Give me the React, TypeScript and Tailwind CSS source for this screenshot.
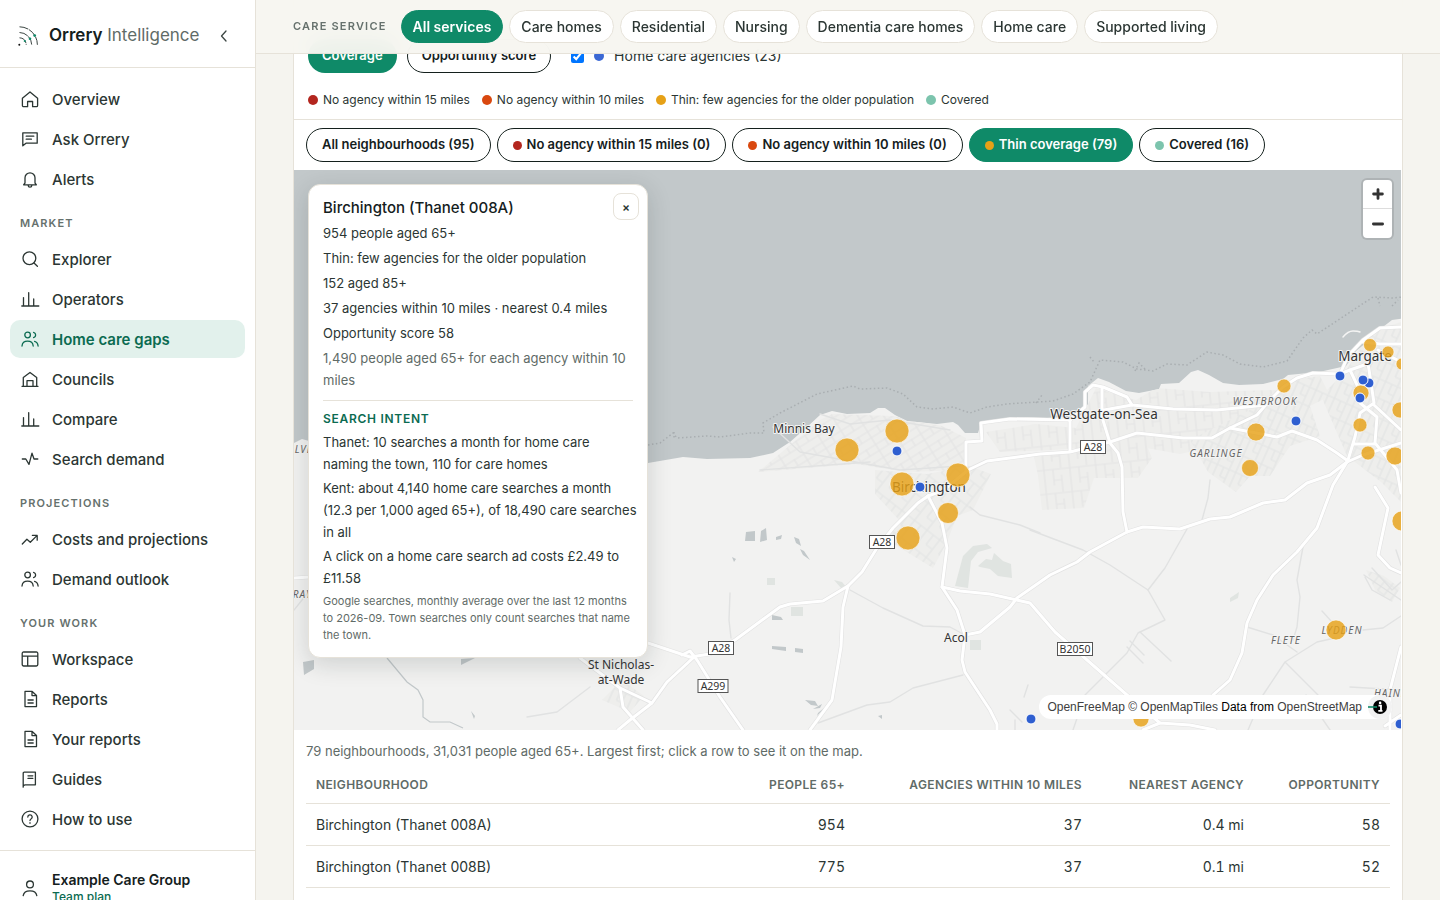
import React, { useState } from 'react';
import clsx from 'clsx';

type IconName =
  | 'home' | 'chat' | 'bell' | 'search' | 'bars' | 'users' | 'council'
  | 'pulse' | 'trend' | 'layout' | 'file' | 'book' | 'help' | 'user';

const ICONS: Record<IconName, React.ReactNode> = {
  home: <path d="M2.4 9.2 10 3l7.6 6.2v7.3a1.2 1.2 0 0 1-1.2 1.2h-3.8v-5.2H7.6v5.2H3.6a1.2 1.2 0 0 1-1.2-1.2z" />,
  chat: <path d="M2.8 3.8h14.4v10.4H6l-3.2 2.6zM6.2 7.2h7.6M6.2 10.2h5.2" />,
  bell: <path d="M5 14V8.8a5 5 0 0 1 10 0V14l1.4 1.8H3.6zM8.2 16v.4a1.8 1.8 0 0 0 3.6 0V16" />,
  search: <><circle cx="9.4" cy="9.2" r="6.4" /><path d="m14 14 3.4 3.2" /></>,
  bars: <path d="M1.8 17h17M3.5 17V8.6M8.7 17V3.6M13.7 17v-7" />,
  users: (
    <>
      <circle cx="7.6" cy="6" r="2.8" />
      <path d="M2 17c.3-3 2.6-4.8 5.6-4.8s5.3 1.8 5.6 4.8M13.6 3.3a2.8 2.8 0 0 1 0 5.4M14.6 12.3c2 .5 3.2 2.2 3.5 4.7" />
    </>
  ),
  council: <path d="M3.3 17.3V8.4L10 3.4l6.7 5v8.9M2 17.3h16M7 17.3v-5.6h6v5.6" />,
  pulse: <path d="M2.3 10h3.5l3.2 5.4L12 4.2l2 5.8h3.8" />,
  trend: <path d="m2.3 15 4.6-4.8 3.4 3L17.2 6.4M12.4 6.4h4.8v4.8" />,
  layout: <path d="M3.6 3h12.8A1.4 1.4 0 0 1 17.8 4.4v11.2a1.4 1.4 0 0 1-1.4 1.4H3.6a1.4 1.4 0 0 1-1.4-1.4V4.4A1.4 1.4 0 0 1 3.6 3zM2.2 7.2h15.6M7.7 7.2V17" />,
  file: <path d="M5 2.4h7.2l4.3 4v11.2H5zM12 2.4v4.2h4.4M8 11h5.2M8 14h5.2" />,
  book: <path d="M3.2 18.2V4.2a1 1 0 0 1 1-1h11.2v12.6H5.2a2 2 0 0 0-2 2.4M8 6.8h4.8M8 9.4h4.8" />,
  help: <><circle cx="10" cy="10" r="7.9" /><path d="M7.8 8a2.2 2.2 0 1 1 3.2 2c-.7.4-1 .8-1 1.6M10 13.7v.6" /></>,
  user: <><circle cx="10" cy="6.4" r="3.4" /><path d="M3.2 17.6c.5-3.2 3.2-4.8 6.8-4.8s6.3 1.6 6.8 4.8" /></>,
};

const Icon = ({ name }: { name: IconName }) => (
  <svg viewBox="0 0 20 20" className="h-5 w-5 shrink-0" fill="none" stroke="currentColor" strokeWidth="1.3" strokeLinejoin="round" strokeLinecap="round" aria-hidden="true">
    {ICONS[name]}
  </svg>
);

const NAV: { title?: string; items: [IconName, string][] }[] = [
  { items: [['home', 'Overview'], ['chat', 'Ask Orrery'], ['bell', 'Alerts']] },
  {
    title: 'Market',
    items: [
      ['search', 'Explorer'],
      ['bars', 'Operators'],
      ['users', 'Home care gaps'],
      ['council', 'Councils'],
      ['bars', 'Compare'],
      ['pulse', 'Search demand'],
    ],
  },
  { title: 'Projections', items: [['trend', 'Costs and projections'], ['users', 'Demand outlook']] },
  {
    title: 'Your work',
    items: [['layout', 'Workspace'], ['file', 'Reports'], ['file', 'Your reports'], ['book', 'Guides'], ['help', 'How to use']],
  },
];

const SERVICES = ['All services', 'Care homes', 'Residential', 'Nursing', 'Dementia care homes', 'Home care', 'Supported living'];

const LEGEND = [
  { dot: 'bg-[#b3261e]', text: 'No agency within 15 miles' },
  { dot: 'bg-[#d9480f]', text: 'No agency within 10 miles' },
  { dot: 'bg-[#e6a117]', text: 'Thin: few agencies for the older population' },
  { dot: 'bg-[#7cc4ad]', text: 'Covered' },
];

const FILTERS = [
  { dot: '', text: 'All neighbourhoods (95)' },
  { dot: 'bg-[#b3261e]', text: 'No agency within 15 miles (0)' },
  { dot: 'bg-[#d9480f]', text: 'No agency within 10 miles (0)' },
  { dot: 'bg-[#e6a117]', text: 'Thin coverage (79)' },
  { dot: 'bg-[#7cc4ad]', text: 'Covered (16)' },
];

const ROWS = [
  ['Birchington (Thanet 008A)', '954', '37', '0.4 mi', '58'],
  ['Birchington (Thanet 008B)', '775', '37', '0.1 mi', '52'],
];

const LAND =
  'M294 443l8-4 7 2 100 40 239-18 35-6 24 2 43-1 23-5 17-11 17-15 13-12 12-4 15 3 23-1 8-5h7l10 7 12 6 30 3 16-2 5 3 7 8h13l3-10 26-4 20-2 20 1 33-2 8-12v-18l10-8 11 4 17 9 13 2 20-4 2-5 18-1 12-11 7-2 11 5 14 8 16 2 24-1 20-5 5-4 31-3 27-6 10-15 10-8 3-8 10-5 13-10 21-3V730H294z';

const SHORE_LINE =
  'M648 445l12-2 13-10 4 5 30-2 13 1 30-4h14l-1-10 17-10 37-19 36-8 7 3 27-1 16 6 14 13 16 2 20-2 17 6 17-6 20-3 46-3 20-7 17-12 10-22 23 2 14 7 16 2 14-7 20 1 20-13 16 3 17 9 23 3 24-6 16-23 9-8 5 4 56-37 20 1 27-3M1378 298l2 8M1392 306l6-6M674 432v7M1135 371l4-8 6 6M1090 357l4 5M1036 403l6-8';

const MAIN_ROADS = [
  'M580 620L648 643 690 657 710 654 735 640 780 607 790 604 823 601 848 586 862 572 877 548 893 528 918 503 928 496',
  'M928 496L942 523 947 548 942 587 957 610 965 635 962 660 965 672 990 710 997 724V730',
  'M942 587L960 591 990 594 1030 603 1055 632 1127 695 1160 723 1143 730M1160 723L1190 725 1215 730',
  'M965 635L980 632 1010 607 1017 598 1040 582 1050 575 1077 562 1090 552 1127 532 1143 527 1180 529 1210 519 1230 517 1263 503 1285 500 1307 483 1330 475 1347 462 1363 455 1401 443',
  'M848 586L843 607 841 647 832 700 810 730',
  'M682 655L690 651 697 660 720 697 743 730',
  'M693 658L667 682 652 703 630 720 618 730M580 658L620 688 623 707 643 730M620 688L652 703',
  'M928 496L944 490 968 470 987 461 1040 454 1070 452 1110 442 1137 433 1183 438 1212 438 1230 428 1257 415 1270 400 1283 387 1297 378 1313 373 1340 374 1350 370 1370 363',
  'M966 472V442L982 441 981 423 1010 419 1070 420 1085 407V392L1093 385 1103 387 1127 397 1132 405 1173 409 1217 410 1247 407 1265 405',
  'M1102 388V417L1110 443 1118 453 1122 467 1123 512 1127 532M1070 420V451M1104 410L1132 405',
  'M1230 428L1277 437 1292 431 1317 440 1337 453 1348 461',
  'M1347 462L1333 485 1317 528 1297 552 1273 575 1257 600 1247 623 1242 653 1230 680 1213 695',
  'M1340 374L1348 356 1363 340 1380 328 1401 327M1363 342L1380 344 1401 344',
  'M1350 370L1358 387 1360 403 1377 417 1375 443 1397 470 1401 493M1368 363L1374 403 1360 413 1355 437 1348 460M1374 405L1401 430M1355 444H1376',
  'M1375 487L1388 508 1378 555 1390 568 1401 573M1401 647L1390 690V730M1401 715L1385 726',
  'M294 578L310 577M1378 350L1401 362',
];

const LANES = [
  'M1030 530L1083 550 1110 565 1148 590 1165 620 1138 633 1127 653 1085 695 1073 730',
  'M1187 529L1165 568 1148 590M1210 480L1208 498 1202 520',
  'M1303 547L1297 580 1300 597 1297 627 1293 640M1247 627L1273 635 1297 652',
  'M1335 638L1317 642 1285 662 1263 695 1248 730M1285 662L1318 695M1363 630L1383 628 1401 616',
  'M850 590L883 608 923 626 950 627 965 635M818 723L867 705 890 702 913 688 963 675',
  'M970 507L980 515 1020 525 1040 533M730 593L729 620 731 638M527 717L557 712 590 687',
  'M1140 632L1171 661M1130 641L1144 655M1127 647L1143 663M1322 611L1332 622M1350 687L1401 690',
  'M1364 575L1401 600M1372 568L1392 590 1401 582M1365 577L1372 590 1390 600M1396 550L1401 565M294 610L310 590',
  'M773 427L800 452 900 470 960 466M760 470L870 462M820 414L850 424 890 420 950 430',
  'M1010 710L1022 722M1028 685L1024 697M1015 720L1015 730M1306 695L1330 730',
];

const PONDS = [
  'M746 532l9-1v10h-10zM761 531l5-3 1 12-7 2zM776 537l6-2-1 4-5 1zM791 532l3 3M794 537l5 2 2 7-5-3zM800 549l4 2 6 9-7-5z',
  'M732 557l4 2-2 3zM772 615l9 2 2 3h-11zM772 646l14 1v4l-14-2zM795 648l8 1v4l-8-1zM805 700l10 1 3 5-7-1zM813 709l9-5-2 4zM818 713l7-6-8 9zM878 716l4-1v4z',
  'M303 662l11-2v9l-10 6zM461 659l14-1-14 7zM471 711l4 5-1 3zM309 504v4',
];

const PARKS = [
  'M955 586l8-30 10-10 14-2 5 4-14 4-7 9-3 27zM978 566l8-7 6 1 2-7 9 8 8 3 1 14-14-2-8-7-10-2z',
  'M767 578h8v7h-8zM791 607h12v9h-12zM834 580l8 2 6 7-7-1zM970 640h11v10h-11zM1230 598l9-6-1 6-8 4z',
];

const BUILT_UP = [
  { fill: 'url(#streetsA)', d: 'M758 472l62-52 12-6 60 2 50 10 24 12v32l-60 2-50-8z' },
  { fill: 'url(#streetsB)', d: 'M875 470l52 4 42-8 22 8-18 36-16 6-10 26-14 26-46-28 12-20-24-26z' },
  { fill: 'url(#streetsC)', d: 'M1034 456l78-14 30-8 10 24-14 20h-44l-10 30-42 2-4-34z' },
  { fill: 'url(#streetsC)', d: 'M986 432l50-8 40 4 20-40 18 6 22 6 20-12 54 4 66-2v30l-50 24-46 10-56-10-70 6-54 2z' },
  { fill: 'url(#streetsD)', d: 'M1190 440l60-30 40-30 30-4 10 20-20 10 10 30-30 10-20 30-20 0-14 16-28-20z' },
  { fill: 'url(#streetsD)', d: 'M1345 372l26-40 30-10v180l-20-20-34-26-26-60z' },
  { fill: 'url(#streetsB)', d: 'M1366 570l18 6 16 12-8 14-16-10z' },
  { fill: 'url(#streetsD)', d: 'M602 700l20-20 22 16-14 16z' },
];

const SHIELDS = [
  { x: 882, y: 542, w: 25, text: 'A28' },
  { x: 721, y: 648, w: 25, text: 'A28' },
  { x: 713, y: 686, w: 30, text: 'A299' },
  { x: 1093, y: 447, w: 25, text: 'A28' },
  { x: 1075, y: 649, w: 35, text: 'B2050' },
];

const AREAS: [number, number, number][] = [
  [847, 450, 12], [897, 431, 12], [902, 484, 12], [958, 475, 12], [948, 513, 10.5], [908, 538, 12],
  [1284, 386, 7], [1256, 432, 9], [1250, 468, 8.5], [1370, 345, 6.5], [1388, 352, 6], [1402, 364, 6],
  [1361, 393, 8], [1360, 425, 7], [1368, 453, 7], [1395, 456, 9], [1400, 410, 8], [1402, 521, 10],
  [1336, 630, 10], [1141, 719, 8],
];

const AGENCIES: [number, number][] = [
  [897, 451], [920, 487], [1296, 421], [1340, 376], [1369, 383], [1363, 380], [1360, 398], [1031, 719], [1400, 724],
];

const CoverageMap = () => (
  <svg viewBox="294 170 1107 560" preserveAspectRatio="xMidYMid slice" className="block h-full w-full bg-[#c2c8ca]" role="img" aria-label="Coverage map">
    <defs>
      <pattern id="streetsA" width="22" height="15" patternUnits="userSpaceOnUse" patternTransform="rotate(-32)">
        <rect width="22" height="15" fill="#eeeeec" />
        <path d="M0 1h22M1 0v15M12 0v8M0 8h22" stroke="#e4e5e5" strokeWidth="1.2" fill="none" />
      </pattern>
      <pattern id="streetsB" width="16" height="22" patternUnits="userSpaceOnUse" patternTransform="rotate(38)">
        <rect width="16" height="22" fill="#eeeeec" />
        <path d="M0 1h16M1 0v22M9 1v12M9 13h7" stroke="#e3e4e4" strokeWidth="1.2" fill="none" />
      </pattern>
      <pattern id="streetsC" width="26" height="24" patternUnits="userSpaceOnUse" patternTransform="rotate(-6)">
        <rect width="26" height="24" fill="#eeeeec" />
        <path d="M0 1h26M1 0v24M10 1v16M18 7v17M10 12h8" stroke="#e4e5e5" strokeWidth="1.2" fill="none" />
      </pattern>
      <pattern id="streetsD" width="20" height="18" patternUnits="userSpaceOnUse" patternTransform="rotate(24)">
        <rect width="20" height="18" fill="#eeeeec" />
        <path d="M0 1h20M1 0v18M8 1v10M14 1v17M8 11h6" stroke="#e3e4e4" strokeWidth="1.2" fill="none" />
      </pattern>
      <clipPath id="land"><path d={LAND} /></clipPath>
    </defs>

    <path d={LAND} fill="#f2f2f1" />
    <g clipPath="url(#land)">
      {BUILT_UP.map((area) => <path key={area.d} d={area.d} fill={area.fill} />)}
    </g>
    {PARKS.map((d) => <path key={d} d={d} fill="#e0e4e1" />)}
    {PONDS.map((d) => <path key={d} d={d} fill="#c2c8ca" />)}
    <path d="M387 658l20 24 11 8 5 10v17l7 5 20 0 13 6" fill="none" stroke="#c2c8ca" strokeWidth="1.2" />
    <path d={SHORE_LINE} fill="none" stroke="#a9aeb1" strokeWidth="1.5" strokeDasharray="1.5 2.5" />

    <g fill="none" strokeLinejoin="round" strokeLinecap="round">
      {LANES.map((d) => <path key={d} d={d} stroke="#e1e2e2" strokeWidth="1.4" />)}
      {MAIN_ROADS.map((d) => <path key={d} d={d} stroke="#e2e2e2" strokeWidth="4.2" />)}
      {MAIN_ROADS.map((d) => <path key={d} d={d} stroke="#ffffff" strokeWidth="3" />)}
      <path d="M1343 337q5-6 10-6t7 1" stroke="#f4f4f3" strokeWidth="1.5" />
    </g>

    <g className="font-['Noto_Sans']" fontSize="10.5" textAnchor="middle" fill="#333333">
      {SHIELDS.map((s) => (
        <g key={`${s.x}-${s.y}`}>
          <rect x={s.x - s.w / 2} y={s.y - 6.5} width={s.w} height="13" fill="#ffffff" stroke="#555555" strokeWidth="1" />
          <text x={s.x} y={s.y + 4}>{s.text}</text>
        </g>
      ))}
    </g>

    <g className="font-['Noto_Sans']" textAnchor="middle" fill="#333333" stroke="#f4f4f3" strokeWidth="2" paintOrder="stroke" strokeLinejoin="round">
      <g fontSize="12">
        <text x="804" y="433">Minnis Bay</text>
        <text x="956" y="642">Acol</text>
        <text x="621" y="669">St Nicholas-</text>
        <text x="621" y="684">at-Wade</text>
      </g>
      <g fontSize="13.5">
        <text x="929" y="492">Birchington</text>
        <text x="1104" y="419">Westgate-on-Sea</text>
        <text x="1365" y="361">Margate</text>
      </g>
      <g fontSize="10" fontStyle="italic" fill="#666666" letterSpacing="1">
        <text x="1265" y="405">WESTBROOK</text>
        <text x="1216" y="457">GARLINGE</text>
        <text x="1286" y="644">FLETE</text>
        <text x="1342" y="634">LYDDEN</text>
        <text x="1374" y="697" textAnchor="start">HAINE</text>
        <text x="313" y="453" textAnchor="end">ALVE</text>
        <text x="312" y="598" textAnchor="end">RAY</text>
      </g>
    </g>

    {AREAS.map(([x, y, r]) => (
      <circle key={`${x}-${y}`} cx={x} cy={y} r={r} fill="#e6a117" fillOpacity="0.82" stroke="#ffffff" strokeOpacity="0.6" strokeWidth="1" />
    ))}
    {AGENCIES.map(([x, y]) => (
      <circle key={`${x}-${y}`} cx={x} cy={y} r="5" fill="#2f5fd0" stroke="#ffffff" strokeWidth="1" />
    ))}
  </svg>
);

const Sidebar = () => (
  <aside className="flex h-screen w-64 shrink-0 flex-col overflow-hidden border-r border-[#e6e2d9] bg-white">
    <div className="flex h-[68px] shrink-0 items-center border-b border-[#e6e2d9] pt-1 pr-[23px] pl-[18px]">
      <svg viewBox="0 0 20 20" className="h-5 w-5 shrink-0" fill="none" stroke="#3c4643" strokeWidth="1" aria-hidden="true">
        <path d="M1.5.8A18 18 0 0 1 19.4 18.8M1.5 6.5a12.5 12.5 0 0 1 12.2 12.3M1.5 11.8a7 7 0 0 1 6.7 7" strokeDasharray="9 .8" />
        <g fill="#0f8a68" stroke="none">
          <circle cx="16.7" cy="9.6" r="1.4" />
          <circle cx="12" cy="12.8" r="1.3" />
          <circle cx="6.8" cy="15" r="1.1" />
        </g>
        <circle cx="1.3" cy="18.7" r="1" fill="#111111" stroke="none" />
      </svg>
      <a href="#" className="ml-[11px] text-[17px] whitespace-nowrap text-[#5f6b67]">
        <span className="font-semibold text-[#14201d]">Orrery</span> Intelligence
      </a>
      <button type="button" aria-label="Collapse sidebar" className="ml-auto flex h-6 w-4 items-center justify-center text-[#3c4643]">
        <svg viewBox="0 0 16 16" className="h-4 w-4" fill="none" stroke="currentColor" strokeWidth="1.3" strokeLinecap="round" strokeLinejoin="round">
          <path d="M10 3 5.5 8l4.5 5" />
        </svg>
      </button>
    </div>

    <nav className="flex shrink-0 flex-col gap-0.5 px-2.5 py-3">
      {NAV.map((group, i) => (
        <React.Fragment key={i}>
          {group.title && (
            <h2 className="h-[38px] px-2.5 pt-[15px] text-[11px] leading-4 font-semibold tracking-[0.1em] text-[#66716d] uppercase">{group.title}</h2>
          )}
          {group.items.map(([icon, label]) => (
            <a
              key={label}
              href="#"
              className={clsx(
                'flex h-[38px] items-center gap-3 rounded-[10px] px-2.5 text-[15px]',
                label === 'Home care gaps' ? 'bg-[#e2f1ec] font-semibold text-[#0b6b51]' : 'font-medium text-[#2b3633]',
              )}
            >
              <Icon name={icon} />
              <span className="pt-0.5">{label}</span>
            </a>
          ))}
        </React.Fragment>
      ))}
    </nav>

    <div className="flex shrink-0 items-center gap-3 border-t border-[#e6e2d9] px-5 pt-5 pb-4 text-[#2b3633]">
      <Icon name="user" />
      <div>
        <div className="text-sm leading-[18px] font-semibold text-[#14201d]">Example Care Group</div>
        <div className="text-xs leading-4 font-medium text-[#0b6b51]">Team plan</div>
      </div>
    </div>
  </aside>
);

const AreaPopup = () => (
  <div className="absolute top-3.5 left-3.5 w-[340px] rounded-xl border border-[#e6e2d9] bg-white px-3.5 py-[13px] text-[13px] leading-[22px] text-[#2b3633] shadow-[0_6px_24px_rgba(20,32,29,0.16)]">
    <button type="button" aria-label="Close" className="absolute top-2 right-2 flex h-[27px] w-[26px] items-center justify-center rounded-lg border border-[#e6e2d9] bg-white text-xs font-semibold">
      ×
    </button>
    <h3 className="mb-1 text-[15px] leading-5 font-medium text-[#14201d]">Birchington (Thanet 008A)</h3>
    <div className="flex flex-col gap-[3px]">
      <p>954 people aged 65+</p>
      <p>Thin: few agencies for the older population</p>
      <p>152 aged 85+</p>
      <p>37 agencies within 10 miles · nearest 0.4 miles</p>
      <p>Opportunity score 58</p>
      <p className="text-[#5f6b67]">1,490 people aged 65+ for each agency within 10 miles</p>
    </div>
    <div className="mt-[9px] border-t border-[#e6e2d9] pt-2">
      <h4 className="mb-0.5 text-xs leading-5 font-semibold tracking-[0.06em] text-[#0b6b51] uppercase">Search intent</h4>
      <div className="-mr-[5px] flex flex-col gap-0.5">
        <p>Thanet: 10 searches a month for home care naming the town, 110 for care homes</p>
        <p>Kent: about 4,140 home care searches a month (12.3 per 1,000 aged 65+), of 18,490 care searches in all</p>
        <p>A click on a home care search ad costs £2.49 to £11.58</p>
      </div>
      <p className="mt-1 text-[11px] leading-[17px] text-[#5f6b67]">
        Google searches, monthly average over the last 12 months to 2026-09. Town searches only count searches that name the town.
      </p>
    </div>
  </div>
);

const App = () => {
  const [service, setService] = useState('All services');
  const [filter, setFilter] = useState('Thin coverage (79)');
  const [showAgencies, setShowAgencies] = useState(true);

  return (
    <div className="flex h-screen overflow-hidden bg-[#f5f4ef] font-['Inter',sans-serif] text-[#2b3633]">
      <Sidebar />

      <div className="relative min-w-0 flex-1">
        <header className="absolute inset-x-0 top-0 z-10 flex h-[54px] items-center gap-3.5 border-b border-[#e6e2d9] bg-[#f7f5f0]/95 px-[37px] backdrop-blur-md">
          <span className="text-[11px] font-semibold tracking-[0.11em] whitespace-nowrap text-[#66716d] uppercase">Care service</span>
          <div className="flex gap-1.5">
            {SERVICES.map((name) => (
              <button
                key={name}
                type="button"
                onClick={() => setService(name)}
                className={clsx(
                  'h-[33px] rounded-full border px-[11px] pt-px text-sm whitespace-nowrap',
                  name === service ? 'border-[#0f8a68] bg-[#0f8a68] font-semibold text-white' : 'border-[#e6e2d9] bg-white font-medium text-[#2b3633]',
                )}
              >
                {name}
              </button>
            ))}
          </div>
        </header>

        <main className="h-full overflow-hidden px-[37px]">
          <section className="min-h-full border-x border-[#e6e2d9] bg-white">
            <div className="border-b border-[#e6e2d9] px-3.5 pt-[39px] pb-[9px]">
              <div className="flex items-center gap-2.5">
                <button type="button" className="h-[34px] rounded-full bg-[#0f8a68] px-3.5 text-[13px] font-semibold text-white">Coverage</button>
                <button type="button" className="h-[34px] rounded-full border border-[#14201d] bg-white px-3.5 text-[13px] font-semibold text-[#14201d]">Opportunity score</button>
                <label className="ml-2.5 flex items-center gap-2.5 text-sm">
                  <input type="checkbox" checked={showAgencies} onChange={(e) => setShowAgencies(e.target.checked)} className="h-[13px] w-[13px]" />
                  <span className="h-2.5 w-2.5 rounded-full bg-[#3b68d4]" />
                  Home care agencies (23)
                </label>
              </div>
              <ul className="mt-[17px] flex items-center gap-3 text-xs leading-5">
                {LEGEND.map((item) => (
                  <li key={item.text} className="flex items-center gap-[5px]">
                    <span className={clsx('h-2.5 w-2.5 rounded-full', item.dot)} />
                    {item.text}
                  </li>
                ))}
              </ul>
            </div>

            <div className="flex gap-1.5 px-3 py-2">
              {FILTERS.map((item) => (
                <button
                  key={item.text}
                  type="button"
                  onClick={() => setFilter(item.text)}
                  className={clsx(
                    'flex h-[34px] items-center justify-center gap-[5px] rounded-full border px-[15px] text-[13px] font-semibold whitespace-nowrap',
                    item.text === filter ? 'border-[#0f8a68] bg-[#0f8a68] text-white' : 'border-[#14201d] bg-white text-[#14201d]',
                  )}
                >
                  {item.dot && <span className={clsx('h-[9px] w-[9px] rounded-full', item.dot)} />}
                  {item.text}
                </button>
              ))}
            </div>

            <div className="relative mr-px h-[560px] overflow-hidden">
              <CoverageMap />
              <AreaPopup />

              <div className="absolute top-2.5 right-[9px] flex w-[29px] flex-col rounded bg-white text-[#333333] shadow-[0_0_0_2px_rgba(0,0,0,0.1)]">
                <button type="button" aria-label="Zoom in" className="flex h-[29px] items-center justify-center border-b border-[#dddddd]">
                  <svg viewBox="0 0 12 12" className="h-3 w-3" stroke="currentColor" strokeWidth="2.8" strokeLinecap="round"><path d="M1.6 6h8.8M6 1.6v8.8" /></svg>
                </button>
                <button type="button" aria-label="Zoom out" className="flex h-[29px] items-center justify-center">
                  <svg viewBox="0 0 12 12" className="h-3 w-3" stroke="currentColor" strokeWidth="2.8" strokeLinecap="round"><path d="M1.4 6h9.2" /></svg>
                </button>
              </div>

              <div className="absolute right-[9px] bottom-[11px] flex h-6 items-center rounded-full bg-white pl-2 font-['Liberation_Sans',sans-serif] text-xs whitespace-nowrap text-black">
                <span>
                  <a href="#" className="text-[#404040]">OpenFreeMap</a> <a href="#" className="text-[#404040]">© OpenMapTiles</a> Data from <a href="#" className="text-[#404040]">OpenStreetMap</a>
                </span>
                <svg viewBox="0 0 24 24" className="ml-1.5 h-6 w-6" aria-hidden="true">
                  <circle cx="12" cy="12" r="12" fill="#f2f2f2" />
                  <circle cx="12" cy="12" r="7" fill="#000000" />
                  <path d="M10.5 10.6H13v5M10.3 15.8h4.2" stroke="#ffffff" strokeWidth="1.8" fill="none" />
                  <circle cx="12.1" cy="7.9" r="1.3" fill="#ffffff" />
                  <path d="M0 12h9" stroke="#0f8a68" strokeWidth="1.6" />
                </svg>
              </div>
            </div>

            <div className="px-3 pt-[11px]">
              <p className="text-[13px] leading-5 text-[#5f6b67]">79 neighbourhoods, 31,031 people aged 65+. Largest first; click a row to see it on the map.</p>
              <table className="mt-1 w-full table-fixed text-right text-sm">
                <colgroup>
                  <col />
                  <col className="w-[150px]" />
                  <col className="w-[237px]" />
                  <col className="w-[162px]" />
                  <col className="w-[136px]" />
                </colgroup>
                <thead>
                  <tr className="h-[38px] border-b border-[#e6e2d9] text-xs tracking-[0.03em] text-[#5f6b67] uppercase">
                    <th className="px-2.5 pt-0.5 text-left font-semibold">Neighbourhood</th>
                    <th className="px-2.5 pt-0.5 font-semibold">People 65+</th>
                    <th className="px-2.5 pt-0.5 font-semibold">Agencies within 10 miles</th>
                    <th className="px-2.5 pt-0.5 font-semibold">Nearest agency</th>
                    <th className="px-2.5 pt-0.5 font-semibold">Opportunity</th>
                  </tr>
                </thead>
                <tbody>
                  {ROWS.map(([name, ...cells]) => (
                    <tr key={name} className="h-[42px] border-b border-[#e6e2d9]">
                      <td className="px-2.5 pt-0.5 text-left">{name}</td>
                      {cells.map((cell, i) => <td key={i} className="px-2.5 pt-0.5 tabular-nums">{cell}</td>)}
                    </tr>
                  ))}
                </tbody>
              </table>
            </div>
          </section>
        </main>
      </div>
    </div>
  );
};

export default App;
